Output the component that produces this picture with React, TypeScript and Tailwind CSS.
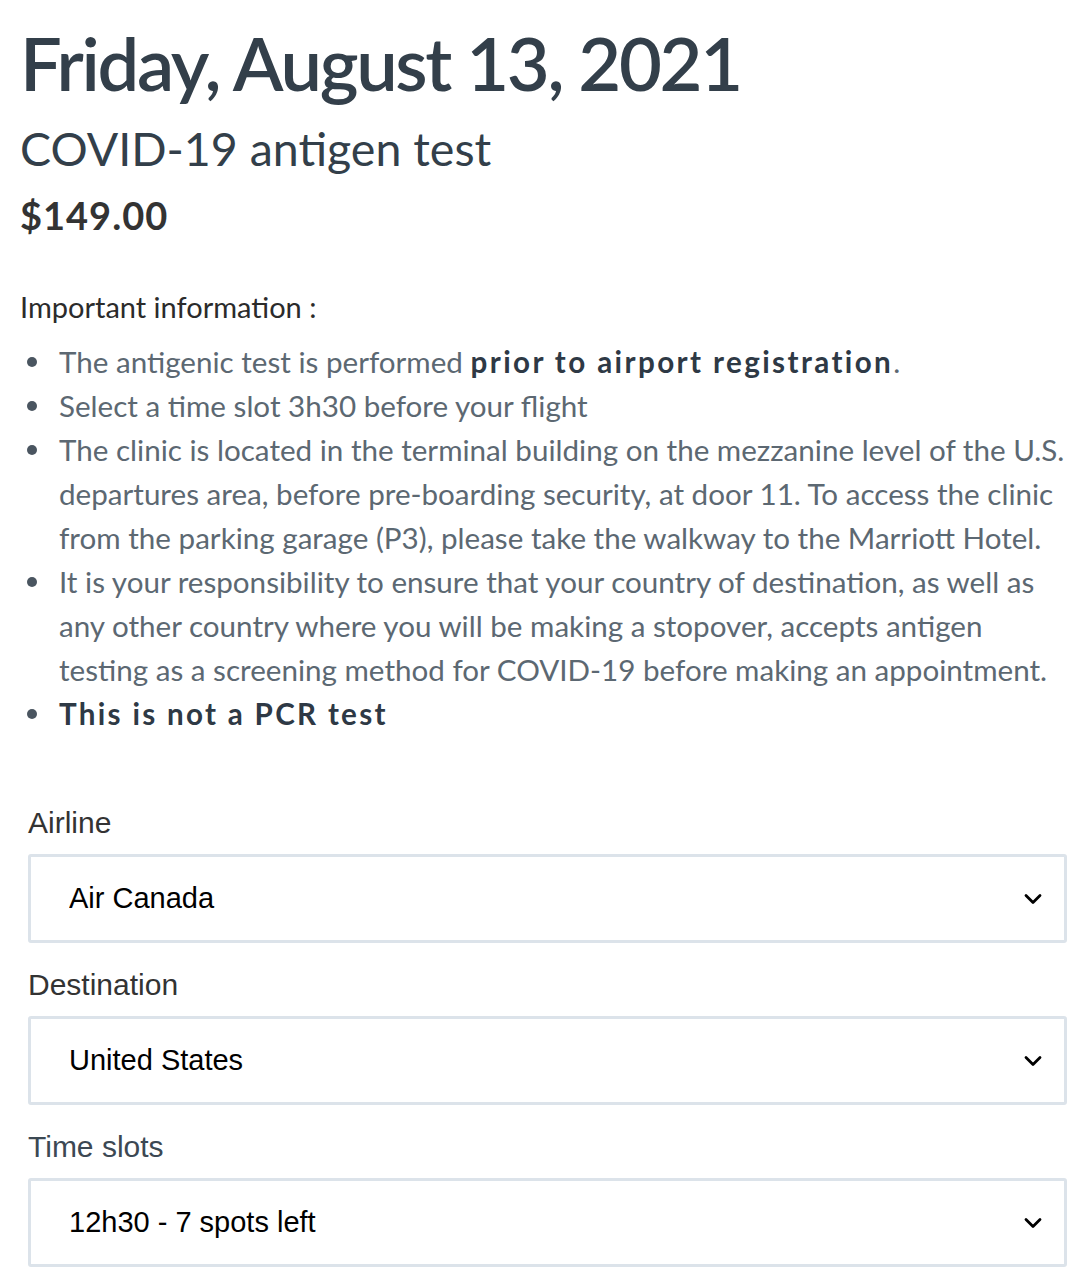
import { ChevronDown } from 'lucide-react';

type Field = {
  label: string;
  value: string;
  labelColor: string;
};

const fields: Field[] = [
  { label: 'Airline', value: 'Air Canada', labelColor: 'text-[#333333]' },
  { label: 'Destination', value: 'United States', labelColor: 'text-[#333333]' },
  { label: 'Time slots', value: '12h30 - 7 spots left', labelColor: 'text-[#3c4853]' },
];

const Dot = () => (
  <span className="mt-[17px] mr-[22px] ml-[7px] h-[10px] w-[10px] shrink-0 rounded-full bg-[#4a5560]" />
);

const App = () => {
  return (
    <div className="min-h-[1276px] w-full bg-white font-['Lato',sans-serif]">
      <div className="px-[20px] pt-[21px]">
        <h1 className="text-[74px] font-semibold leading-[84px] tracking-[-2.3px] text-[#333f4a]">
          Friday, August 13, 2021
        </h1>
        <h2 className="mt-[15px] text-[46.5px] font-normal leading-[56px] text-[#333f4a]">
          COVID-19 antigen test
        </h2>
        <p className="mt-[14px] text-[38px] font-bold leading-[50px] tracking-[1px] text-[#333]">
          $149.00
        </p>

        <p className="mt-[45px] text-[29px] leading-[44px] text-[#2b2b2b]">
          Important information :
        </p>
        <ul className="mt-[11px] text-[29.6px] leading-[44px] text-[#5c6872]">
          <li className="flex">
            <Dot />
            <span>
              The antigenic test is performed{' '}
              <b className="font-bold tracking-[2.4px] text-[#2e3945]">prior to airport registration</b>.
            </span>
          </li>
          <li className="flex">
            <Dot />
            <span>Select a time slot 3h30 before your flight</span>
          </li>
          <li className="flex">
            <Dot />
            <span>
              The clinic is located in the terminal building on the mezzanine level of the U.S.
              departures area, before pre-boarding security, at door 11. To access the clinic
              from the parking garage (P3), please take the walkway to the Marriott Hotel.
            </span>
          </li>
          <li className="flex">
            <Dot />
            <span>
              It is your responsibility to ensure that your country of destination, as well as
              any other country where you will be making a stopover, accepts antigen testing as a
              screening method for COVID-19 before making an appointment.
            </span>
          </li>
          <li className="flex">
            <Dot />
            <b className="font-bold tracking-[2.3px] text-[#2e3945]">This is not a PCR test</b>
          </li>
        </ul>
      </div>

      <div className="mt-[67px] pl-[28px] pr-[19px] font-['Liberation_Sans',Arial,sans-serif]">
        {fields.map((f) => (
          <div key={f.label} className="mb-[22px]">
            <label className={`block text-[30px] leading-[40px] ${f.labelColor}`}>{f.label}</label>
            <div className="relative mt-[11px]">
              <select
                defaultValue={f.value}
                className="block h-[89px] w-full appearance-none rounded-[3px] border-[3px] border-[#dce3ea] bg-white pl-[38px] text-[29px] text-black outline-none"
              >
                <option>{f.value}</option>
              </select>
              <ChevronDown
                size={28}
                strokeWidth={2.4}
                className="pointer-events-none absolute right-[20px] top-[31px] text-black"
              />
            </div>
          </div>
        ))}
      </div>
    </div>
  );
};

export default App;
